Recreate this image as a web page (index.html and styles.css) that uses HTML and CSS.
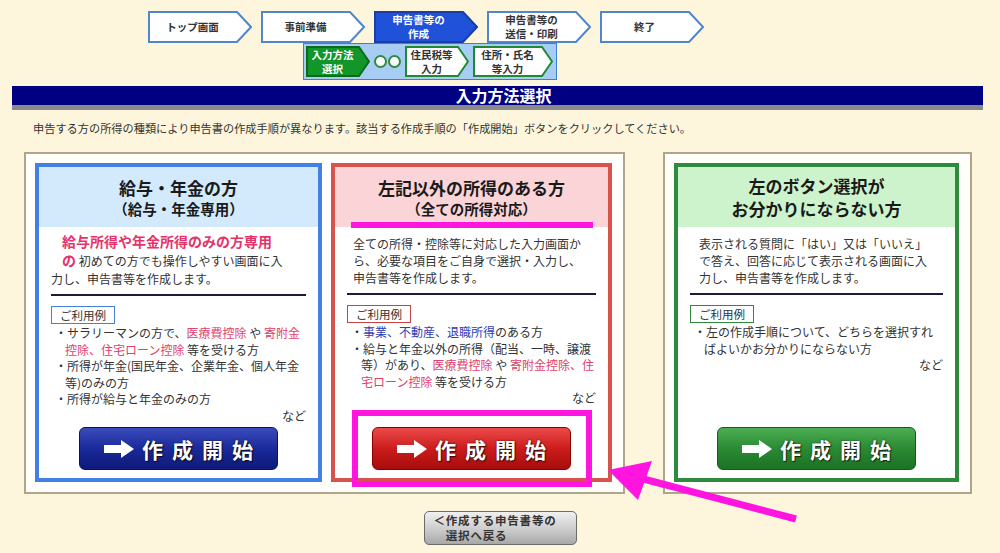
FILE: index.html
```html
<!DOCTYPE html>
<html lang="ja">
<head>
    <meta charset="UTF-8">
    <meta name="viewport" content="width=device-width, initial-scale=1.0">
    <title>入力方法選択</title>
    <link rel="stylesheet" href="styles.css">
</head>
<body>
<div class="page">
    <div class="steps">
        <div class="step-row">
            <div class="step">
                <svg viewBox="0 0 104 32"><polygon points="1,1 89,1 103,16 89,31 1,31"/></svg>
                <span>トップ画面</span>
            </div>
            <div class="step">
                <svg viewBox="0 0 104 32"><polygon points="1,1 89,1 103,16 89,31 1,31"/></svg>
                <span>事前準備</span>
            </div>
            <div class="step current">
                <svg viewBox="0 0 104 32"><polygon points="1,1 89,1 103,16 89,31 1,31"/></svg>
                <span>申告書等の<br>作成</span>
            </div>
            <div class="step">
                <svg viewBox="0 0 104 32"><polygon points="1,1 89,1 103,16 89,31 1,31"/></svg>
                <span>申告書等の<br>送信・印刷</span>
            </div>
            <div class="step">
                <svg viewBox="0 0 104 32"><polygon points="1,1 89,1 103,16 89,31 1,31"/></svg>
                <span>終了</span>
            </div>
        </div>
        <div class="sub-steps">
            <div class="sub-step current small">
                <svg viewBox="0 0 64 31"><polygon points="1,1 53,1 63,15.5 53,30 1,30"/></svg>
                <span>入力方法<br>選択</span>
            </div>
            <div class="dots"><i></i><i></i></div>
            <div class="sub-step small">
                <svg viewBox="0 0 64 31"><polygon points="1,1 53,1 63,15.5 53,30 1,30"/></svg>
                <span>住民税等<br>入力</span>
            </div>
            <div class="sub-step wide">
                <svg viewBox="0 0 80 31"><polygon points="1,1 69,1 79,15.5 69,30 1,30"/></svg>
                <span>住所・氏名<br>等入力</span>
            </div>
        </div>
    </div>

    <div class="title-bar"><h1>入力方法選択</h1></div>
    <p class="lead">申告する方の所得の種類により申告書の作成手順が異なります。該当する作成手順の「作成開始」ボタンをクリックしてください。</p>

    <div class="choices">
        <div class="group">
            <div class="card card-blue">
                <div class="card-head">
                    <h2>給与・年金の方</h2>
                    <p class="sub">（給与・年金専用）</p>
                </div>
                <div class="card-body">
                    <p class="intro"><strong class="note">給与所得や年金所得のみの方専用<br>の</strong> 初めての方でも操作しやすい画面に入<br>力し、申告書等を作成します。</p>
                    <hr>
                    <span class="example">ご利用例</span>
                    <ul class="cases">
                        <li>・サラリーマンの方で、<em class="red">医療費控除</em> や <em class="red">寄附金<br>控除、住宅ローン控除</em> 等を受ける方</li>
                        <li>・所得が年金(国民年金、企業年金、個人年金<br>等)のみの方</li>
                        <li>・所得が給与と年金のみの方</li>
                    </ul>
                    <p class="etc">など</p>
                    <button class="start-btn">
                        <svg viewBox="0 0 30 18"><polygon points="0,5 17,5 17,0 30,9 17,18 17,13 0,13"/></svg>
                        <span>作成開始</span>
                    </button>
                </div>
            </div>

            <div class="card card-red">
                <div class="card-head">
                    <h2>左記以外の所得のある方</h2>
                    <p class="sub">（全ての所得対応）</p>
                </div>
                <div class="card-body">
                    <p class="intro">全ての所得・控除等に対応した入力画面か<br>ら、必要な項目をご自身で選択・入力し、<br>申告書等を作成します。</p>
                    <hr>
                    <span class="example">ご利用例</span>
                    <ul class="cases">
                        <li>・<em class="blue">事業、不動産、退職所得</em>のある方</li>
                        <li>・給与と年金以外の所得（配当、一時、譲渡<br>等）があり、<em class="red">医療費控除</em> や <em class="red">寄附金控除、住<br>宅ローン控除</em> 等を受ける方</li>
                    </ul>
                    <p class="etc">など</p>
                    <button class="start-btn">
                        <svg viewBox="0 0 30 18"><polygon points="0,5 17,5 17,0 30,9 17,18 17,13 0,13"/></svg>
                        <span>作成開始</span>
                    </button>
                </div>
            </div>
        </div>

        <div class="group">
            <div class="card card-green">
                <div class="card-head">
                    <h2>左のボタン選択が<br>お分かりにならない方</h2>
                </div>
                <div class="card-body">
                    <p class="intro">表示される質問に「はい」又は「いいえ」<br>で答え、回答に応じて表示される画面に入<br>力し、申告書等を作成します。</p>
                    <hr>
                    <span class="example">ご利用例</span>
                    <ul class="cases">
                        <li>・左の作成手順について、どちらを選択すれ<br>ばよいかお分かりにならない方</li>
                    </ul>
                    <p class="etc">など</p>
                    <button class="start-btn">
                        <svg viewBox="0 0 30 18"><polygon points="0,5 17,5 17,0 30,9 17,18 17,13 0,13"/></svg>
                        <span>作成開始</span>
                    </button>
                </div>
            </div>
        </div>
    </div>

    <div class="back">
        <button class="back-btn">＜作成する申告書等の<br>　選択へ戻る</button>
    </div>

    <!-- annotation marks drawn over the page -->
    <svg class="marks" viewBox="0 0 1000 553">
        <rect x="351" y="222" width="242" height="6"/>
        <rect class="frame" x="355" y="413" width="234" height="71"/>
        <line x1="796" y1="519" x2="632" y2="476"/>
        <polygon points="608,470 652,461 638,500"/>
    </svg>
</div>
</body>
</html>
```

FILE: styles.css
```css
body {
    margin: 0;
    background: #fdf6dc;
    font-family: "Noto Sans CJK JP", "Noto Sans", sans-serif;
    color: #333;
}
.page {
    position: relative;
    width: 1000px;
    height: 553px;
    padding-top: 11px;
    box-sizing: border-box;
    overflow: hidden;
}

/* step navigation */
.steps {
    padding-left: 148px;
}
.step-row {
    display: flex;
    gap: 9px;
}
.step {
    position: relative;
    width: 104px;
    height: 32px;
    display: flex;
    align-items: center;
}
.step svg, .sub-step svg {
    position: absolute;
    left: 0;
    top: 0;
    width: 100%;
    height: 100%;
}
.step polygon {
    fill: #fff;
    stroke: #4f86cf;
    stroke-width: 2;
}
.step.current polygon {
    fill: #1f52d8;
    stroke: #1b3f9e;
}
.step span {
    position: relative;
    width: 89px;
    text-align: center;
    font-size: 10.5px;
    font-weight: bold;
    line-height: 14px;
}
.step.current span {
    color: #fff;
}
.sub-steps {
    margin-left: 155px;
    width: 254px;
    height: 37px;
    box-sizing: border-box;
    background: #a7cdf5;
    border: 1px solid #3c7fd6;
    display: flex;
    align-items: center;
    padding: 0 2px;
    gap: 4px;
}
.sub-step {
    position: relative;
    height: 31px;
    display: flex;
    align-items: center;
}
.sub-step.small {
    width: 64px;
}
.sub-step.wide {
    width: 80px;
}
.sub-step polygon {
    fill: #fff;
    stroke: #1f8a33;
    stroke-width: 2;
}
.sub-step.current polygon {
    fill: #12962a;
    stroke: #0b6b1c;
}
.sub-step span {
    position: relative;
    width: calc(100% - 11px);
    text-align: center;
    font-size: 10.5px;
    font-weight: bold;
    line-height: 14px;
}
.sub-step.current span {
    color: #fff;
}
.dots {
    display: flex;
    gap: 1px;
}
.dots i {
    width: 9px;
    height: 9px;
    border: 2px solid #2c8c3c;
    border-radius: 50%;
    background: #fff;
}

/* heading */
.title-bar {
    margin: 6px 17px 0 12px;
    height: 19px;
    background: #000080;
    border-bottom: 5px solid #8a8a8a;
}
.title-bar h1 {
    margin: 0;
    padding-left: 12px;
    color: #fff;
    font-size: 16px;
    line-height: 19px;
    text-align: center;
}
.lead {
    margin: 10px 0 0 33px;
    font-size: 11.2px;
    line-height: 16px;
}

/* choice cards */
.choices {
    display: flex;
    gap: 38px;
    margin: 16px 0 0 24px;
}
.group {
    display: flex;
    gap: 9px;
    padding: 9px 11px 10px 9px;
    border: 2px solid #aea68a;
    background: #fffefa;
}
.card {
    width: 287px;
    height: 319px;
    box-sizing: border-box;
    border: 4px solid;
    background: #fff;
    display: flex;
    flex-direction: column;
}
.card-blue {
    border-color: #4280e6;
}
.card-red {
    width: 281px;
    border-color: #d8534e;
}
.card-green {
    width: 285px;
    border-color: #2e8b3e;
}
.card-head {
    height: 60px;
    display: flex;
    flex-direction: column;
    justify-content: center;
    text-align: center;
    color: #1a1a1a;
}
.card-blue .card-head {
    background: #d3eafc;
}
.card-red .card-head {
    background: #fbd4d7;
}
.card-green .card-head {
    background: #cdf3cd;
}
.card-head h2 {
    margin: 0;
    font-size: 17px;
    line-height: 23px;
}
.card-head .sub {
    margin: 0;
    font-size: 14.5px;
    font-weight: bold;
    line-height: 20px;
}
.card-body {
    flex: 1;
    display: flex;
    flex-direction: column;
    padding: 8px 12px 8px;
    font-size: 12px;
    white-space: nowrap;
}
.card-blue .card-body {
    padding-top: 5px;
}
.intro {
    margin: 0;
    line-height: 17px;
}
.card-red .intro {
    padding-left: 6px;
}
.card-green .intro {
    padding-left: 9px;
}
.note {
    color: #e5336a;
    font-size: 14px;
    line-height: 19px;
    padding-left: 11px;
    -webkit-box-decoration-break: clone;
    box-decoration-break: clone;
}
.card-body hr {
    border: 0;
    height: 2px;
    background: #1b1b3b;
    margin: 7px 0 0;
}
.example {
    align-self: flex-start;
    margin-top: 10px;
    padding: 1px 8px;
    border: 1.5px solid;
    font-size: 11.5px;
    line-height: 14px;
}
.card-blue .example {
    border-color: #4280e6;
}
.card-red .example {
    border-color: #c9443f;
}
.card-green .example {
    border-color: #2e8b3e;
}
.cases {
    list-style: none;
    margin: 1px 0 0;
    padding: 0 0 0 14px;
    line-height: 16.5px;
}
.cases li {
    text-indent: -10px;
}
.cases em {
    font-style: normal;
}
.red {
    color: #e0406e;
}
.blue {
    color: #2f3db4;
}
.etc {
    margin: 0;
    text-align: right;
    line-height: 15px;
}
.start-btn {
    margin-top: auto;
    align-self: center;
    width: 199px;
    height: 43px;
    display: flex;
    align-items: center;
    justify-content: center;
    gap: 8px;
    border-radius: 6px;
    border: 1px solid;
    color: #fff;
    font-family: inherit;
    font-size: 21px;
    font-weight: bold;
    cursor: pointer;
    text-shadow: 0 0 2px rgba(0, 0, 0, 0.7), 1px 1px 1px rgba(0, 0, 0, 0.6);
}
.start-btn svg {
    width: 30px;
    height: 18px;
    fill: #fff;
}
.start-btn span {
    letter-spacing: 9px;
    margin-right: -9px;
}
.card-blue .start-btn {
    background: linear-gradient(#3a4bbd, #1b2a99 50%, #0e197a);
    border-color: #0a145e;
}
.card-red .start-btn {
    background: linear-gradient(#ec4a4a, #cc1c1c 50%, #a80c0c);
    border-color: #8a0000;
}
.card-green .start-btn {
    background: linear-gradient(#4cae52, #2b8a33 50%, #1b7223);
    border-color: #145a1a;
}

/* back button */
.back {
    display: flex;
    justify-content: center;
    margin-top: 17px;
}
.back-btn {
    width: 153px;
    height: 34px;
    padding: 0 0 0 9px;
    text-align: left;
    border: 1px solid #6b6b6b;
    border-radius: 5px;
    background: linear-gradient(#f0f0f0, #c8c8c8 60%, #a8a8a8);
    color: #333;
    font-family: inherit;
    font-size: 11.5px;
    font-weight: bold;
    letter-spacing: 0.8px;
    line-height: 15px;
    cursor: pointer;
}

/* annotation overlay */
.marks {
    position: absolute;
    left: 0;
    top: 0;
    width: 1000px;
    height: 553px;
    pointer-events: none;
    fill: #ff14e0;
}
.marks .frame {
    fill: none;
    stroke: #ff14e0;
    stroke-width: 6;
}
.marks line {
    stroke: #ff14e0;
    stroke-width: 7;
}
```
